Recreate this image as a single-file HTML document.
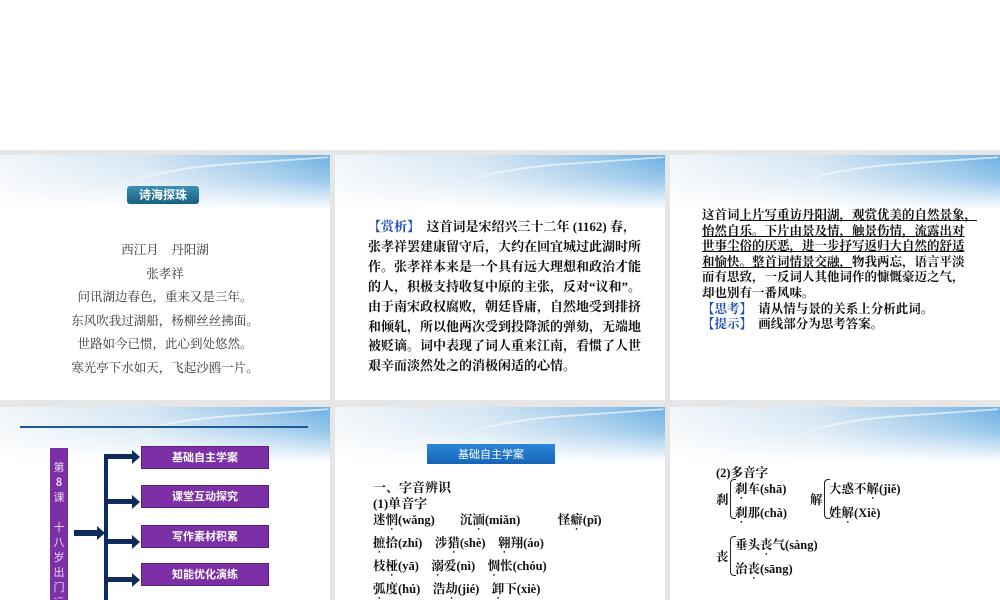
<!DOCTYPE html>
<html><head><meta charset="utf-8"><style>
*{margin:0;padding:0;box-sizing:border-box}
body{width:1000px;height:600px;background:#fff;position:relative;overflow:hidden;font-family:"Liberation Serif","Noto Serif CJK SC","Noto Sans CJK SC",serif;color:#111}
.bg{position:absolute;left:0;top:150px;width:1000px;height:450px;background:#e6e6e6}
.s{position:absolute;background:#fff;overflow:hidden}
.s .h{position:absolute;left:0;top:0;right:0;height:55px;background:linear-gradient(180deg,rgba(255,255,255,0) 0%,rgba(255,255,255,0.3) 45%,#fff 100%),linear-gradient(90deg,#f2f6fa 0%,#d3e5f3 45%,#8cc0e8 85%,#6aafe2 100%)}
.s .h:after{content:"";position:absolute;left:40%;top:8px;width:60%;height:30px;border-top:2px solid rgba(255,255,255,0.6);border-radius:50% 0 0 0;transform:rotate(-4deg)}
.a{position:absolute;white-space:nowrap}
.b{font-family:"Liberation Serif","Noto Serif CJK SC",serif;font-weight:bold}
.blue{color:#1f4fb5}
.u{text-decoration:underline}
.btn{position:absolute;background:#7d2fa6;color:#fff;font-family:"Noto Sans CJK SC",sans-serif;font-weight:bold;font-size:11px;text-align:center;line-height:21px;border:1px solid #5a1f7d}
.d{text-emphasis:dot;-webkit-text-emphasis:dot;text-emphasis-position:under;-webkit-text-emphasis-position:under;}
</style></head><body>
<div class="bg"></div>

<!-- slide 1 -->
<div class="s" style="left:0;top:155px;width:330px;height:245px">
<div class="h"></div>
<div class="a" style="left:127px;top:31px;width:72px;height:18px;background:linear-gradient(#3c8fb0,#176080);border-radius:3px;color:#fff;font-family:'Noto Sans CJK SC',sans-serif;font-weight:bold;font-size:12px;text-align:center;line-height:18px">诗海探珠</div>
<div class="a" style="left:0;width:330px;top:83px;text-align:center;font-size:12.5px;line-height:23.5px;color:#333;font-family:'Noto Serif CJK SC',serif">西江月　丹阳湖<br>张孝祥<br>问讯湖边春色，重来又是三年。<br>东风吹我过湖船，杨柳丝丝拂面。<br>世路如今已惯，此心到处悠然。<br>寒光亭下水如天，飞起沙鸥一片。</div>
</div>

<!-- slide 2 -->
<div class="s" style="left:335px;top:155px;width:330px;height:245px">
<div class="h"></div>
<div class="a b" style="left:33px;top:62px;font-size:13px;line-height:19.9px">
<span class="blue">【赏析】</span>　这首词是宋绍兴三十二年 (1162) 春，<br>张孝祥罢建康留守后，大约在回宜城过此湖时所<br>作。张孝祥本来是一个具有远大理想和政治才能<br>的人，积极支持收复中原的主张，反对“议和”。<br>由于南宋政权腐败，朝廷昏庸，自然地受到排挤<br>和倾轧，所以他两次受到投降派的弹劾，无端地<br>被贬谪。词中表现了词人重来江南，看惯了人世<br>艰辛而淡然处之的消极闲适的心情。</div>
</div>

<!-- slide 3 -->
<div class="s" style="left:670px;top:155px;width:330px;height:245px">
<div class="h"></div>
<div class="a" style="left:32px;top:53px;font-size:12.5px;line-height:15.6px;font-family:'Liberation Serif','Noto Serif CJK SC',serif;font-weight:bold">
这首词<span class="u">上片写重访丹阳湖，观赏优美的自然景象，</span><br><span class="u">怡然自乐。下片由景及情，触景伤情，流露出对</span><br><span class="u">世事尘俗的厌恶，进一步抒写返归大自然的舒适</span><br><span class="u">和愉快。整首词情景交融，</span>物我两忘，语言平淡<br>而有思致，一反词人其他词作的慷慨豪迈之气，<br>却也别有一番风味。<br><span class="blue">【思考】</span>　请从情与景的关系上分析此词。<br><span class="blue">【提示】</span>　画线部分为思考答案。</div>
</div>

<!-- slide 4 -->
<div class="s" style="left:0;top:407px;width:330px;height:193px">
<div class="h"></div>
<div class="a" style="left:20px;top:19px;width:288px;height:2px;background:#1e5a9c"></div>
<div class="a" style="left:50px;top:41px;width:18px;height:160px;background:#7d2fa6;color:#e8d8f0;font-family:'Noto Sans CJK SC',sans-serif;font-size:11px;line-height:15px;text-align:center;white-space:normal;padding-top:12px">第<br><b>8</b><br>课<br><br>十<br>八<br>岁<br>出<br>门<br>远<br>行</div>
<div class="a" style="left:104px;top:47px;width:4px;height:150px;background:#0f2a5c"></div>
<div class="a" style="left:74px;top:123px;width:26px;height:6px;background:#0f2a5c"></div>
<div class="a" style="left:97px;top:119px;width:0;height:0;border-left:8px solid #0f2a5c;border-top:7px solid transparent;border-bottom:7px solid transparent"></div>
<div class="a" style="left:104px;top:47px;width:30px;height:5px;background:#0f2a5c"></div><div class="a" style="left:132px;top:43px;border-left:8px solid #0f2a5c;border-top:7px solid transparent;border-bottom:7px solid transparent"></div>
<div class="a" style="left:104px;top:92px;width:30px;height:5px;background:#0f2a5c"></div><div class="a" style="left:132px;top:88px;border-left:8px solid #0f2a5c;border-top:7px solid transparent;border-bottom:7px solid transparent"></div>
<div class="a" style="left:104px;top:132px;width:30px;height:5px;background:#0f2a5c"></div><div class="a" style="left:132px;top:128px;border-left:8px solid #0f2a5c;border-top:7px solid transparent;border-bottom:7px solid transparent"></div>
<div class="a" style="left:104px;top:170px;width:30px;height:5px;background:#0f2a5c"></div><div class="a" style="left:132px;top:166px;border-left:8px solid #0f2a5c;border-top:7px solid transparent;border-bottom:7px solid transparent"></div>
<div class="btn" style="left:141px;top:39px;width:128px">基础自主学案</div>
<div class="btn" style="left:141px;top:78px;width:128px">课堂互动探究</div>
<div class="btn" style="left:141px;top:118px;width:128px">写作素材积累</div>
<div class="btn" style="left:141px;top:156px;width:128px">知能优化演练</div>
</div>

<!-- slide 5 -->
<div class="s" style="left:335px;top:407px;width:330px;height:193px">
<div class="h"></div>
<div class="a" style="left:92px;top:37px;width:128px;height:20px;background:linear-gradient(#2d86d8,#1565b8);color:#fff;font-family:'Noto Sans CJK SC',sans-serif;font-size:11px;text-align:center;line-height:20px">基础自主学案</div>
<div class="a b" style="left:38px;top:73px;font-size:13px;line-height:16px">一、字音辨识<br>(1)单音字</div>
<div class="a b" style="left:38px;top:103px;font-size:12.5px;line-height:20px">
迷<span class="d">惘</span>(wǎng)　　沉<span class="d">湎</span>(miǎn)　　　怪<span class="d">癖</span>(pǐ)<br>
<span class="d">摭</span>拾(zhí)　涉<span class="d">猎</span>(shè)　<span class="d">翱</span>翔(áo)<br>
枝<span class="d">桠</span>(yā)　<span class="d">溺</span>爱(nì)　<span class="d">惆</span>怅(chóu)<br>
<span class="d">弧</span>度(hú)　浩<span class="d">劫</span>(jié)　<span class="d">卸</span>下(xiè)</div>
</div>

<!-- slide 6 -->
<div class="s" style="left:670px;top:407px;width:330px;height:193px">
<div class="h"></div>
<div class="a b" style="left:46px;top:56px;font-size:12.5px">(2)多音字</div>
<div class="a b" style="left:46px;top:83px;font-size:12.5px">刹</div>
<div class="a" style="left:60px;top:72px;width:6px;height:40px;border:1px solid #222;border-right:none;border-radius:4px 0 0 4px"></div>
<div class="a b" style="left:65px;top:71px;font-size:12.5px;line-height:22px"><span class="d">刹</span>车(shā)<br><span class="d">刹</span>那(chà)</div>
<div class="a b" style="left:140px;top:83px;font-size:12.5px">解</div>
<div class="a" style="left:154px;top:72px;width:6px;height:40px;border:1px solid #222;border-right:none;border-radius:4px 0 0 4px"></div>
<div class="a b" style="left:159px;top:71px;font-size:12.5px;line-height:22px">大惑不<span class="d">解</span>(jiě)<br>姓<span class="d">解</span>(Xiè)</div>
<div class="a b" style="left:46px;top:140px;font-size:12.5px">丧</div>
<div class="a" style="left:60px;top:129px;width:6px;height:40px;border:1px solid #222;border-right:none;border-radius:4px 0 0 4px"></div>
<div class="a b" style="left:65px;top:127px;font-size:12.5px;line-height:22px">垂头<span class="d">丧</span>气(sàng)<br>治<span class="d">丧</span>(sāng)</div>
</div>
</body></html>
